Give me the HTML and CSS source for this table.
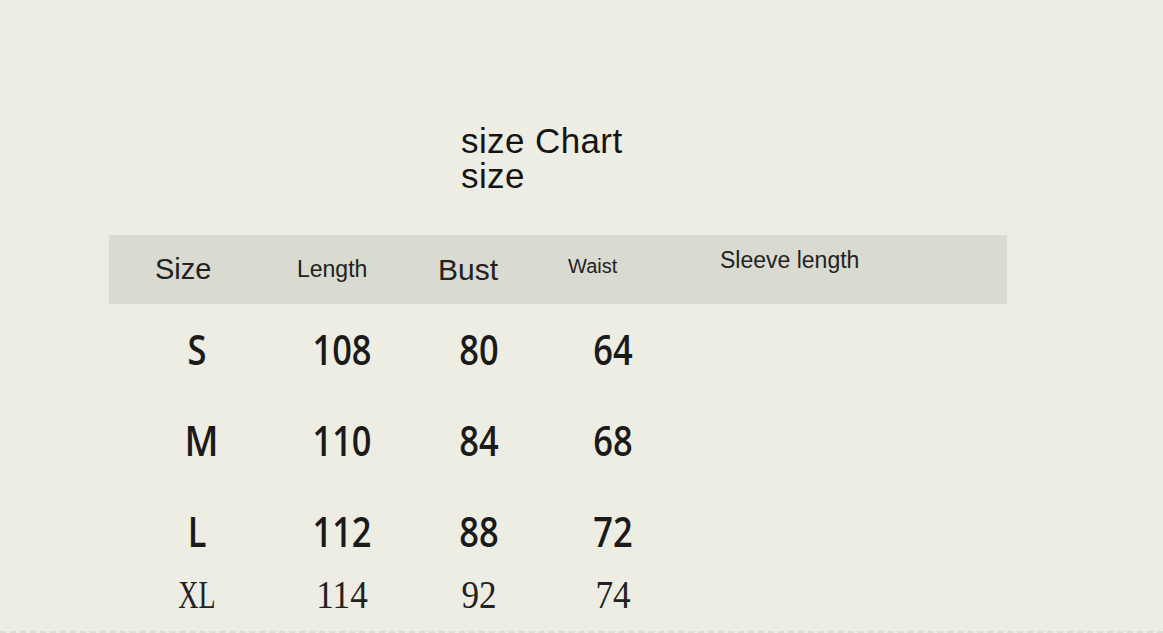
FILE: index.html
```html
<!DOCTYPE html>
<html lang="en">
<head>
<meta charset="utf-8">
<title>size Chart</title>
<link rel="stylesheet" href="styles.css">
</head>
<body>
<main class="page">
  <h1 class="title"><span class="t-line">size Chart</span><span class="t-line">size</span></h1>
  <section class="chart">
    <div class="head">
      <span class="h h-size">Size</span>
      <span class="h h-length">Length</span>
      <span class="h h-bust">Bust</span>
      <span class="h h-waist">Waist</span>
      <span class="h h-sleeve">Sleeve length</span>
    </div>
    <div class="row">
      <span class="c">S</span><span class="c">108</span><span class="c">80</span><span class="c">64</span><span class="c"></span>
    </div>
    <div class="row">
      <span class="c c-m">M</span><span class="c">110</span><span class="c">84</span><span class="c">68</span><span class="c"></span>
    </div>
    <div class="row">
      <span class="c">L</span><span class="c">112</span><span class="c">88</span><span class="c">72</span><span class="c"></span>
    </div>
    <div class="row row-xl">
      <span class="c c-xl">XL</span><span class="c">114</span><span class="c">92</span><span class="c">74</span><span class="c"></span>
    </div>
  </section>
  <div class="rule"></div>
</main>
</body>
</html>
```
FILE: styles.css
```css
* { box-sizing: border-box; }
html, body {
  margin: 0;
  padding: 0;
  background: #eeede3;
}
body {
  width: 1163px;
  height: 633px;
  overflow: hidden;
  font-family: "Liberation Sans", Arial, sans-serif;
  color: #1a1a1a;
}
.page {
  display: flex;
  flex-direction: column;
  height: 633px;
}
.title {
  margin: 0;
  padding: 123px 0 0 461px;
  font-size: 35px;
  font-weight: 400;
  letter-spacing: 0.4px;
  height: 235px;
  color: #141414;
  display: flex;
  flex-direction: column;
}
.t-line {
  display: block;
  height: 35px;
  line-height: 35px;
}
.chart {
  width: 898px;
  margin-left: 109px;
}
.head {
  height: 69px;
  background: #d9dad0;
  display: grid;
  grid-template-columns: 188px 141px 130px 152px 1fr;
  color: #222;
}
.h {
  display: block;
  line-height: 1;
}
.h-size { padding: 20px 0 0 46px; font-size: 29px; }
.h-length { padding: 23px 0 0 0; font-size: 23px; }
.h-bust { padding: 20px 0 0 0; font-size: 30px; }
.h-waist { padding: 21px 0 0 0; font-size: 20px; }
.h-sleeve { padding: 14px 0 0 0; font-size: 23px; }
.row {
  display: grid;
  grid-template-columns: 176px 114px 160px 108px 1fr;
  height: 91px;
  align-items: center;
  font-family: "Open Sans", "Noto Sans", sans-serif;
  font-weight: 600;
  font-size: 41px;
  color: #1a1a1a;
}
.c {
  text-align: center;
  display: block;
  transform: scaleX(0.84);
  line-height: 1;
}
.c-m { transform: scaleX(0.9); padding-left: 10px; }
.row-xl {
  height: 60px;
  margin-top: -12px;
  font-family: "Liberation Serif", "Times New Roman", serif;
  font-weight: 400;
  font-size: 40px;
  color: #222;
}
.row-xl .c { transform: scaleX(0.88); }
.row-xl .c-xl { transform: scaleX(0.7); }
.rule {
  margin-top: auto;
  height: 2px;
  border-bottom: 2px dashed #dddcd2;
}
```
